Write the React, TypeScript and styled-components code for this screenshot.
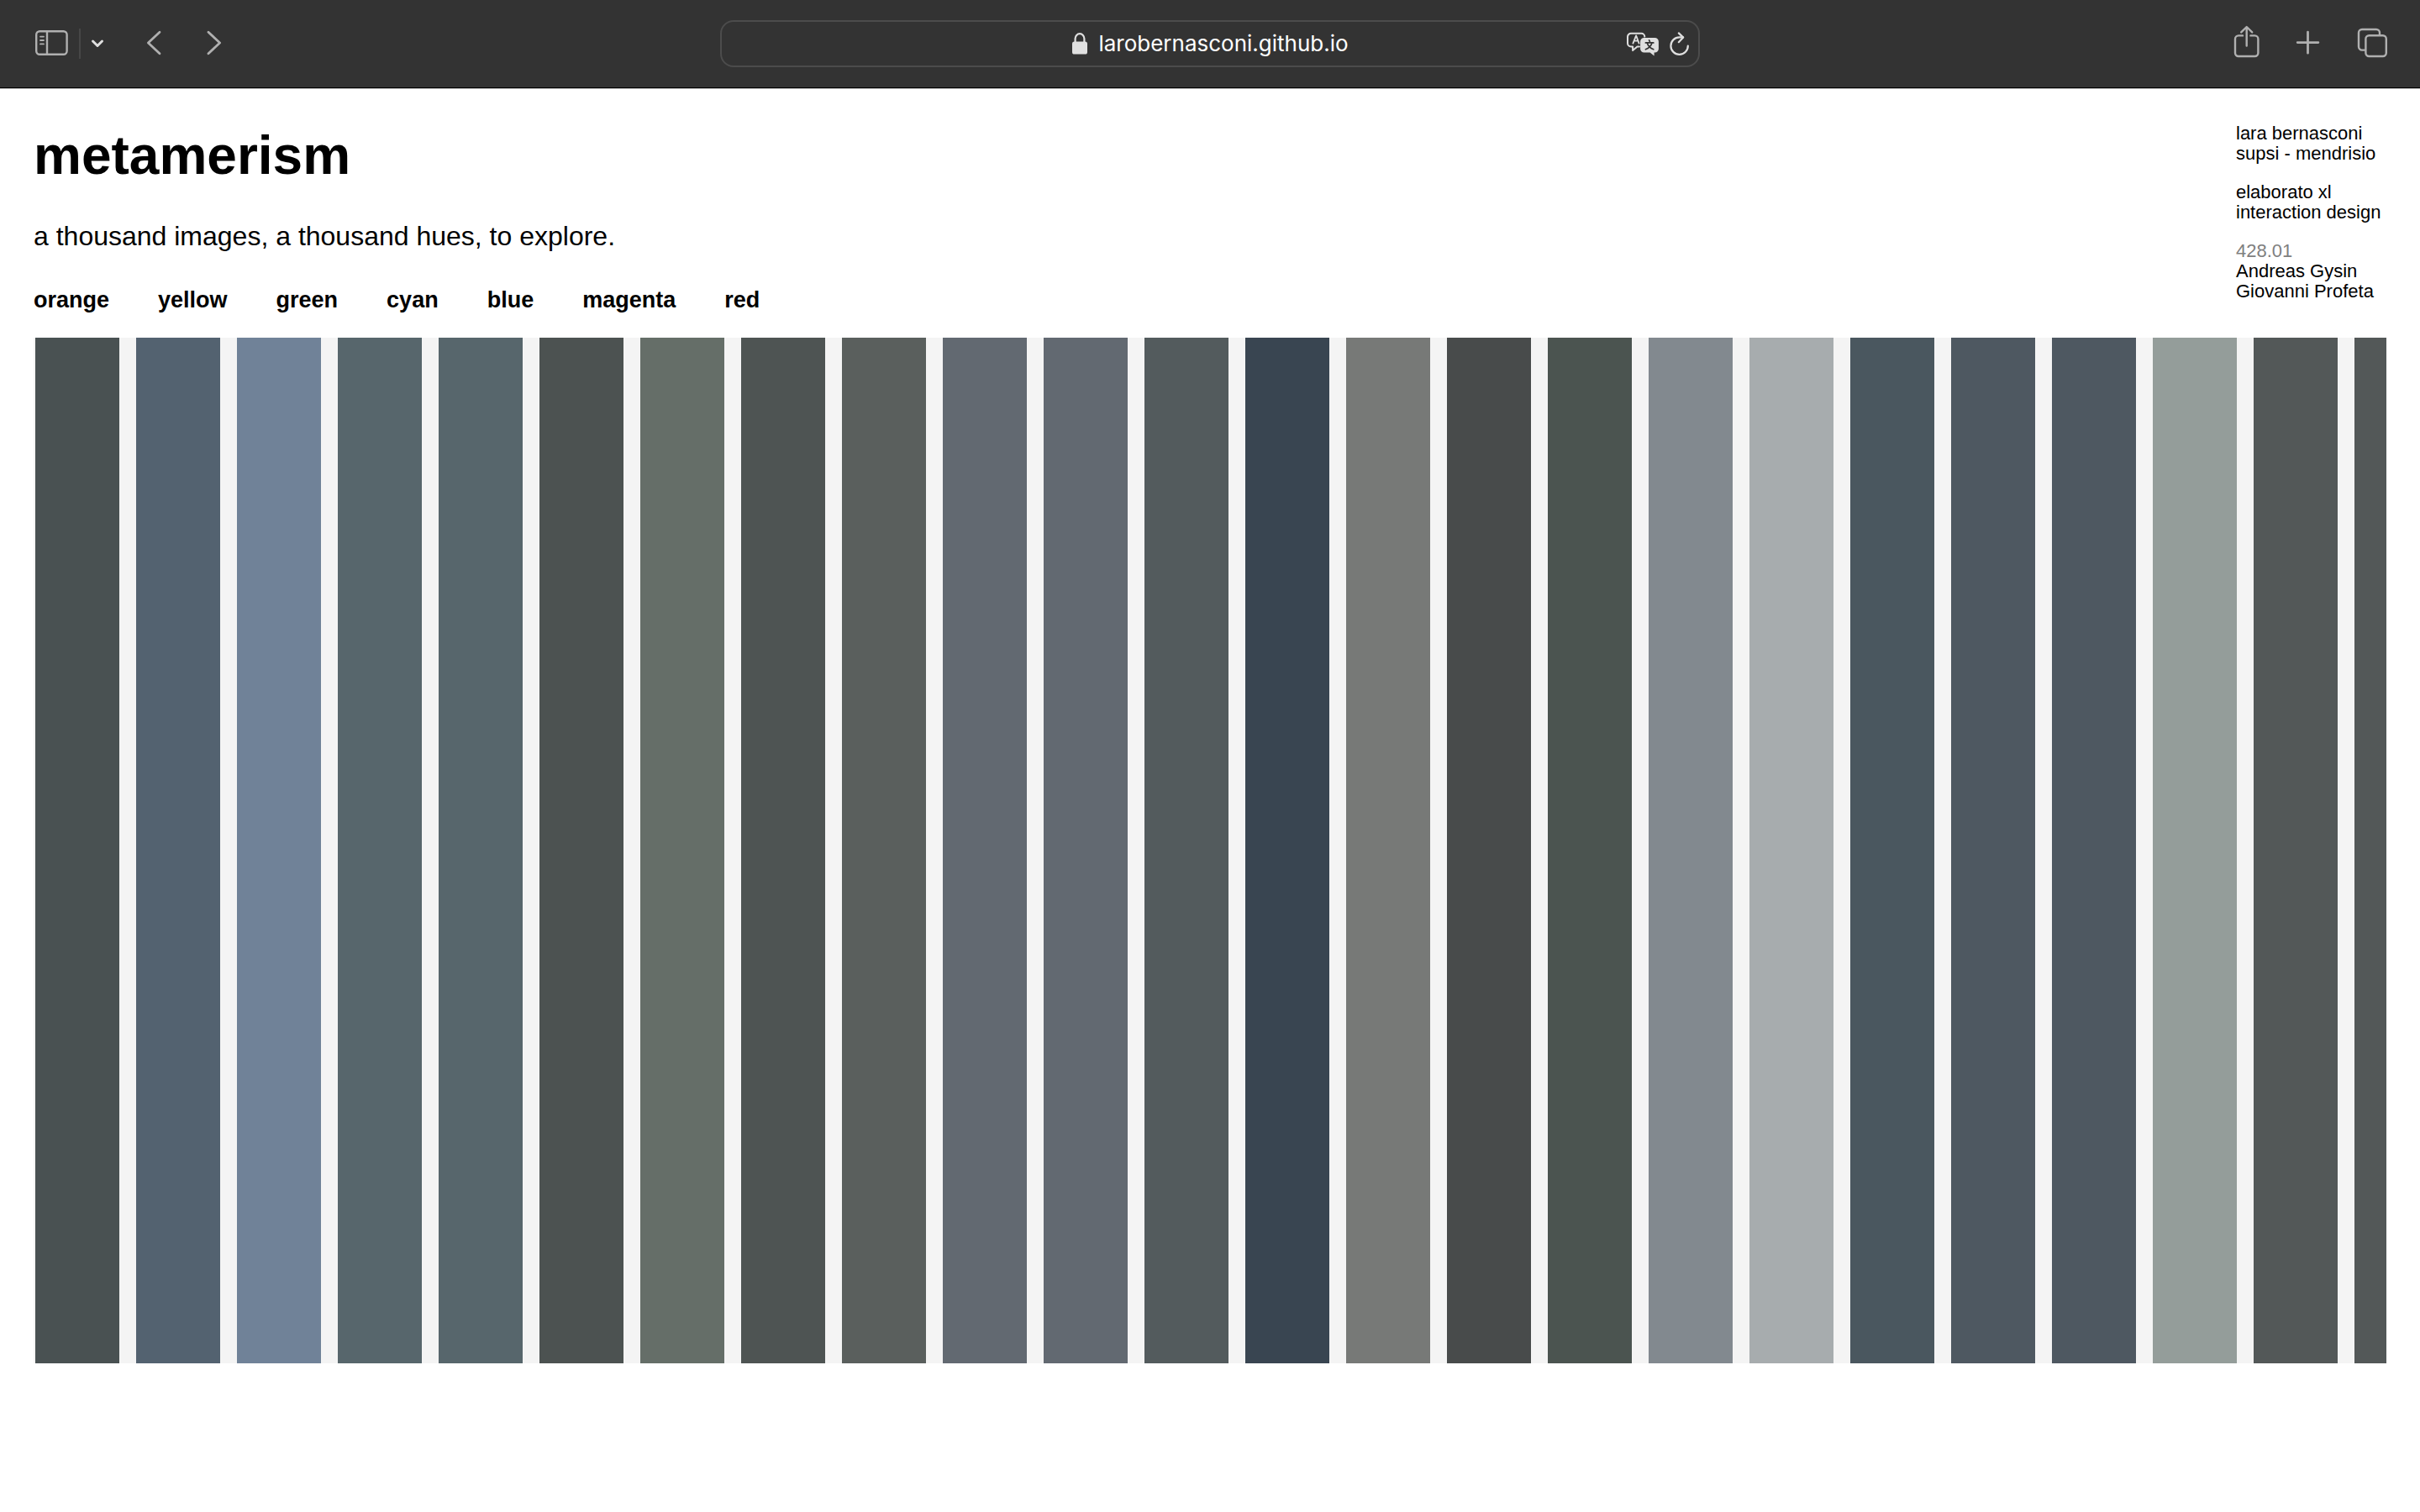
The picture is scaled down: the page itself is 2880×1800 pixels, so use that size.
import React from "react";
import styled, { createGlobalStyle } from "styled-components";

const GlobalStyle = createGlobalStyle`
  *, *::before, *::after { box-sizing: border-box; }
  body {
    margin: 0;
    background: #fff;
    color: #000;
    font-family: Helvetica, "Liberation Sans", Arial, sans-serif;
  }
`;

/* ---------- browser toolbar ---------- */

const Toolbar = styled.header`
  display: grid;
  grid-template-columns: 1fr minmax(0, 1166px) 1fr;
  align-items: center;
  height: 106px;
  padding: 0 38px 1px;
  background: #333;
  border-bottom: 1px solid #b9b9b9;
  box-shadow: inset 0 -1px 0 #000;
`;

const ToolGroup = styled.div<{ $align?: string; $gap: number }>`
  display: flex;
  align-items: center;
  justify-content: ${(p) => p.$align ?? "flex-start"};
  gap: ${(p) => p.$gap}px;
`;

const IconButton = styled.button<{ $width?: number; $bright?: boolean }>`
  display: flex;
  flex: none;
  width: ${(p) => p.$width ?? 44}px;
  height: 44px;
  padding: 0;
  border: 0;
  background: none;
  color: ${(p) => (p.$bright ? "#dfdfdf" : "#b0b0b0")};
  cursor: pointer;

  svg {
    width: 100%;
    height: 100%;
    fill: none;
    stroke: currentColor;
    stroke-width: 2.4;
    stroke-linecap: round;
    stroke-linejoin: round;
  }
`;

const Divider = styled.span`
  width: 2px;
  height: 36px;
  background: #474747;
`;

const AddressBar = styled.form`
  display: grid;
  grid-template-columns: 1fr auto 1fr;
  align-items: center;
  height: 56px;
  padding: 0 8px;
  border: 2px solid #4c4c4c;
  border-radius: 16px;
`;

const AddressLabel = styled.label`
  grid-column: 2;
  display: flex;
  align-items: center;
  gap: 12px;

  svg {
    width: 20px;
    height: 28px;
  }
`;

const AddressInput = styled.input`
  field-sizing: content;
  padding: 0;
  border: 0;
  outline: 0;
  background: none;
  color: #fff;
  font: 400 26px/34px Inter, Roboto, sans-serif;
`;

/* ---------- page ---------- */

const Page = styled.main`
  padding: 41px 40px 0;
`;

const Intro = styled.section`
  display: flex;
  justify-content: space-between;
  align-items: flex-start;
`;

const Title = styled.h1`
  margin: 0 0 40px;
  font-size: 64px;
  line-height: 76px;
  font-weight: 700;
`;

const Subtitle = styled.p`
  margin: 0 0 43px;
  font-size: 32px;
  line-height: 36px;
`;

const HueNav = styled.nav`
  display: flex;
  gap: 58px;
  margin-bottom: 30px;
`;

const HueButton = styled.button`
  padding: 0;
  border: 0;
  background: none;
  color: inherit;
  font: inherit;
  font-size: 27px;
  line-height: 30px;
  font-weight: 700;
  cursor: pointer;
`;

const Credits = styled.aside`
  width: 179px;
  font-size: 22px;
  line-height: 24px;
  white-space: nowrap;
`;

const CreditBlock = styled.p`
  margin: 0 0 22px;
`;

const Course = styled.span`
  color: #808080;
`;

const Strip = styled.ul`
  display: flex;
  gap: 20px;
  height: calc(100vh - 579px);
  min-height: 300px;
  margin: 0;
  padding: 0 0 0 2px;
  overflow: hidden;
  background: #f4f4f4;
  list-style: none;
`;

const Swatch = styled.li<{ $color: string }>`
  flex: 0 0 100px;
  background: ${(p) => p.$color};
`;

const hues = ["orange", "yellow", "green", "cyan", "blue", "magenta", "red"];

const swatches = [
  "#495152", "#536270", "#708298", "#57666c", "#57666c", "#4c5251",
  "#656e68", "#4e5453", "#5a5f5d", "#626971", "#626971", "#535b5d",
  "#394551", "#777977", "#484b4b", "#4b5450", "#82898f", "#a7acae",
  "#4a575f", "#4e5861", "#4e5861", "#949d9a", "#535858", "#535858",
];

const SidebarIcon = () => (
  <svg viewBox="0 0 44 44" aria-hidden="true">
    <rect x="3.2" y="7.2" width="36.4" height="27.6" rx="4" />
    <path d="M16 7.2v27.6" />
    <path d="M8 13.6h4M8 18h4M8 22.4h4" strokeWidth="1.8" />
  </svg>
);

const ChevronDownIcon = () => (
  <svg viewBox="0 0 20 44" aria-hidden="true">
    <path d="M4.5 19l5.5 5.5 5.5-5.5" strokeWidth="3" />
  </svg>
);

const BackIcon = () => (
  <svg viewBox="0 0 44 44" aria-hidden="true">
    <path d="M29 8.2L15.4 21 29 33.8" strokeWidth="2.8" />
  </svg>
);

const ForwardIcon = () => (
  <svg viewBox="0 0 44 44" aria-hidden="true">
    <path d="M15 8.2L28.6 21 15 33.8" strokeWidth="2.8" />
  </svg>
);

const LockIcon = () => (
  <svg viewBox="0 0 20 28" aria-hidden="true">
    <rect x="1" y="11.5" width="18" height="15" rx="2.6" fill="#e0e0e0" />
    <path d="M4.6 12V8a5.4 5.8 0 0 1 10.8 0v4" fill="none" stroke="#e0e0e0" strokeWidth="2.2" />
  </svg>
);

const TranslateIcon = () => (
  <svg viewBox="0 0 40 44" aria-hidden="true">
    <path
      d="M16 25.5h-2.5l-5.4 4.6v-4.6H6a4 4 0 0 1-4-4v-7.7a4 4 0 0 1 4-4h12.3a4 4 0 0 1 4 3.8"
      strokeWidth="2"
    />
    <path d="M8.4 21.6l3.7-9.2 3.5 9.2M9.6 18.7h5" strokeWidth="1.8" />
    <path
      d="M21.6 15H34.4a4.5 4.5 0 0 1 4.5 4.5V28a4.5 4.5 0 0 1-4.5 4.5H33.6V36.4L28.6 32.5H21.6a4.5 4.5 0 0 1-4.5-4.5V19.5A4.5 4.5 0 0 1 21.6 15z"
      fill="currentColor"
      stroke="none"
    />
    <path
      d="M27.6 17.8l.8 1.6M23.4 20.9h9.4M31 21c-1 3.5-4 6.5-7.6 7.8M25.2 21c1 3.5 4 6.5 7.6 7.8"
      stroke="#333"
      strokeWidth="1.7"
    />
  </svg>
);

const ReloadIcon = () => (
  <svg viewBox="0 0 28 44" aria-hidden="true">
    <path d="M23.8 24.5a10.2 10.2 0 1 1-10.2-10.1h4.4" strokeWidth="2.2" />
    <path d="M12.8 9.4l5.4 5.2-5.4 5.6" strokeWidth="2.2" />
  </svg>
);

const ShareIcon = () => (
  <svg viewBox="0 0 44 44" aria-hidden="true">
    <path d="M17 12.4h-5a4 4 0 0 0-4 4V33a4 4 0 0 0 4 4h19.4a4 4 0 0 0 4-4V16.4a4 4 0 0 0-4-4h-5" />
    <path d="M21.7 24.5V2.6M15.2 8.4l6.5-6.4 6.5 6.4" />
  </svg>
);

const PlusIcon = () => (
  <svg viewBox="0 0 44 44" aria-hidden="true">
    <path d="M21.5 8.2v25M9.2 20.6h24.7" strokeWidth="2.8" />
  </svg>
);

const TabsIcon = () => (
  <svg viewBox="0 0 44 44" aria-hidden="true">
    <rect x="17.4" y="12.2" width="24.4" height="24.8" rx="4" />
    <path d="M16.5 29.6H13a4 4 0 0 1-4-4V9a4 4 0 0 1 4-4h17a4 4 0 0 1 4 4v2.8" />
  </svg>
);

const LeftTools = styled(ToolGroup)`
  padding-left: 2px;

  button:nth-of-type(3) {
    margin-left: 25px;
    margin-right: 18px;
  }
`;

export default function App() {
  return (
    <>
      <GlobalStyle />
      <Toolbar>
        <LeftTools $gap={10}>
          <IconButton aria-label="Show sidebar"><SidebarIcon /></IconButton>
          <Divider />
          <IconButton $width={20} $bright aria-label="Tab groups"><ChevronDownIcon /></IconButton>
          <IconButton aria-label="Back"><BackIcon /></IconButton>
          <IconButton aria-label="Forward"><ForwardIcon /></IconButton>
        </LeftTools>

        <AddressBar onSubmit={(e) => e.preventDefault()}>
          <AddressLabel>
            <LockIcon />
            <AddressInput type="text" aria-label="Address" defaultValue="larobernasconi.github.io" />
          </AddressLabel>
          <ToolGroup $align="flex-end" $gap={10}>
            <IconButton type="button" $width={40} $bright aria-label="Translate"><TranslateIcon /></IconButton>
            <IconButton type="button" $width={28} $bright aria-label="Reload"><ReloadIcon /></IconButton>
          </ToolGroup>
        </AddressBar>

        <ToolGroup $align="flex-end" $gap={29}>
          <IconButton aria-label="Share"><ShareIcon /></IconButton>
          <IconButton aria-label="New tab"><PlusIcon /></IconButton>
          <IconButton aria-label="Tab overview"><TabsIcon /></IconButton>
        </ToolGroup>
      </Toolbar>

      <Page>
        <Intro>
          <div>
            <Title>metamerism</Title>
            <Subtitle>a thousand images, a thousand hues, to explore.</Subtitle>
            <HueNav>
              {hues.map((hue) => (
                <HueButton key={hue} type="button">{hue}</HueButton>
              ))}
            </HueNav>
          </div>
          <Credits>
            <CreditBlock>lara bernasconi<br />supsi - mendrisio</CreditBlock>
            <CreditBlock>elaborato xl<br />interaction design</CreditBlock>
            <CreditBlock><Course>428.01</Course><br />Andreas Gysin<br />Giovanni Profeta</CreditBlock>
          </Credits>
        </Intro>
        <Strip>
          {swatches.map((color, i) => (
            <Swatch key={i} $color={color} />
          ))}
        </Strip>
      </Page>
    </>
  );
}
